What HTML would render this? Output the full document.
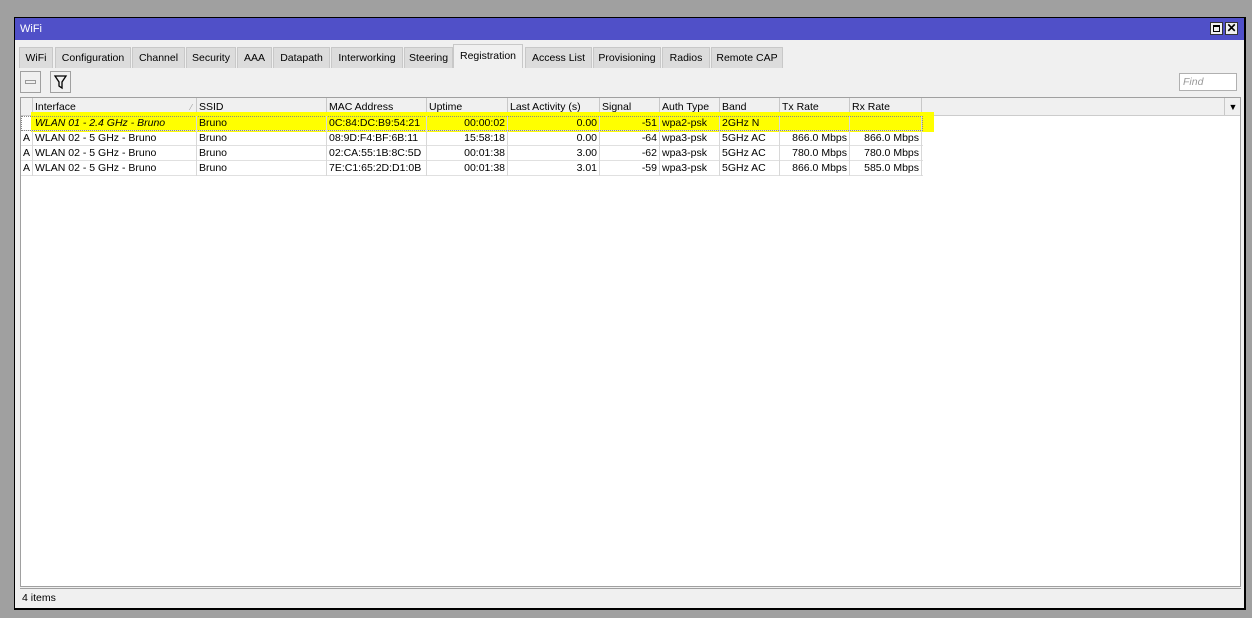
<!DOCTYPE html>
<html><head><style>
*{margin:0;padding:0;box-sizing:border-box}
body{width:1252px;height:618px;background:#a0a0a0;font-family:"Liberation Sans",sans-serif;font-size:10.5px;color:#000;position:relative;overflow:hidden}
.win{position:absolute;left:14px;top:17px;width:1232px;height:593px;background:#f0f0f0;border:1px solid #000;border-right:2px solid #000;border-bottom:2px solid #000}
.title{position:absolute;left:0;top:0;width:100%;height:22px;background:#5050c8;color:#fff;font-size:11px;padding:5px 5px}
.tb{position:absolute;top:4px;width:13px;height:13px;background:#f0f0f0;border:1px solid #333}
.tabs{position:absolute;left:4px;top:26px;height:24px}
.tab{position:absolute;top:3px;height:21px;background:#dcdcdc;border:1px solid #c8c8c8;border-bottom:none;padding:4px 0 0;text-align:center}
.tab.act{top:0;height:24px;background:#f0f0f0;padding-top:5px}
.btn{position:absolute;top:53px;width:21px;height:22px;border:1px solid #a0a0a0;background:#f0f0f0}
.find{position:absolute;left:1164px;top:55px;width:58px;height:18px;background:#fff;border:1px solid #b0b0b0;color:#999;font-style:italic;padding:2px 3px}
.grid{position:absolute;left:5px;top:79px;width:1221px;height:490px;background:#fff;border:1px solid #a0a0a0}
.hdr{position:absolute;left:0;top:0;width:100%;height:18px;background:#f0f0f0;border-bottom:1px solid #ccc}
.c{position:absolute;white-space:nowrap;height:15px;line-height:15px;padding:0 2px;border-right:1px solid #d8d8d8}
.hdr .c{height:17px;line-height:19px;border-right:1px solid #c8c8c8}
.r{text-align:right}
.row{position:absolute;left:0;height:15px;width:902px;border-bottom:1px solid #e0e0e0}
.status{position:absolute;left:5px;top:570px;width:1221px;height:18px;border-top:1px solid #a0a0a0;padding:3px 2px}
.hl{position:absolute;left:10px;top:14px;width:903px;height:20px;background:#ffff00}
</style></head><body>
<div class="win">
<div class="title">WiFi
<div class="tb" style="left:1195px"><div style="position:absolute;left:2px;top:2px;width:7px;height:7px;border:1px solid #000;border-top-width:2px"></div></div>
<div class="tb" style="left:1210px;font-weight:bold;color:#000;font-size:12px;line-height:11px;text-align:center">✕</div>
</div>
<div class="tabs">
<div class="tab" style="left:0;width:34px">WiFi</div>
<div class="tab" style="left:36px;width:76px">Configuration</div>
<div class="tab" style="left:113px;width:53px">Channel</div>
<div class="tab" style="left:167px;width:50px">Security</div>
<div class="tab" style="left:218px;width:35px">AAA</div>
<div class="tab" style="left:254px;width:57px">Datapath</div>
<div class="tab" style="left:312px;width:72px">Interworking</div>
<div class="tab" style="left:385px;width:49px">Steering</div>
<div class="tab act" style="left:434px;width:70px">Registration</div>
<div class="tab" style="left:506px;width:67px">Access List</div>
<div class="tab" style="left:574px;width:68px">Provisioning</div>
<div class="tab" style="left:643px;width:48px">Radios</div>
<div class="tab" style="left:692px;width:72px">Remote CAP</div>
</div>
<div class="btn" style="left:5px"><div style="position:absolute;left:4px;top:8px;width:11px;height:4px;border:1px solid #999"></div></div>
<div class="btn" style="left:35px"><svg width="19" height="20" viewBox="0 0 19 20"><path d="M4 4h11l-4 6v6l-3-2v-4z" fill="none" stroke="#000" stroke-width="1.3"/></svg></div>
<div class="find">Find</div>
<div class="grid">
<div class="hdr">
<div class="c" style="left:0;width:12px"></div>
<div class="c" style="left:12px;width:164px">Interface<span style="position:absolute;right:4px;color:#999;font-size:8px">⁄</span></div>
<div class="c" style="left:176px;width:130px">SSID</div>
<div class="c" style="left:306px;width:100px">MAC Address</div>
<div class="c" style="left:406px;width:81px">Uptime</div>
<div class="c" style="left:487px;width:92px">Last Activity (s)</div>
<div class="c" style="left:579px;width:60px">Signal</div>
<div class="c" style="left:639px;width:60px">Auth Type</div>
<div class="c" style="left:699px;width:60px">Band</div>
<div class="c" style="left:759px;width:70px">Tx Rate</div>
<div class="c" style="left:829px;width:72px">Rx Rate</div>
<div class="c" style="left:1203px;width:17px;border-left:1px solid #c8c8c8;border-right:none;font-size:9px;text-align:center">▼</div>
</div>
<div class="hl"></div>
<div class="row" style="top:18px;outline:1px dotted #888;outline-offset:-1px">
<div class="c" style="left:12px;width:164px;font-style:italic">WLAN 01 - 2.4 GHz - Bruno</div>
<div class="c" style="left:176px;width:130px">Bruno</div>
<div class="c" style="left:306px;width:100px">0C:84:DC:B9:54:21</div>
<div class="c r" style="left:406px;width:81px">00:00:02</div>
<div class="c r" style="left:487px;width:92px">0.00</div>
<div class="c r" style="left:579px;width:60px">-51</div>
<div class="c" style="left:639px;width:60px">wpa2-psk</div>
<div class="c" style="left:699px;width:60px">2GHz N</div>
<div class="c" style="left:759px;width:70px"></div>
<div class="c" style="left:829px;width:72px"></div>
</div>
<div class="row" style="top:33px">
<div class="c" style="left:0;width:12px">A</div>
<div class="c" style="left:12px;width:164px">WLAN 02 - 5 GHz - Bruno</div>
<div class="c" style="left:176px;width:130px">Bruno</div>
<div class="c" style="left:306px;width:100px">08:9D:F4:BF:6B:11</div>
<div class="c r" style="left:406px;width:81px">15:58:18</div>
<div class="c r" style="left:487px;width:92px">0.00</div>
<div class="c r" style="left:579px;width:60px">-64</div>
<div class="c" style="left:639px;width:60px">wpa3-psk</div>
<div class="c" style="left:699px;width:60px">5GHz AC</div>
<div class="c r" style="left:759px;width:70px">866.0 Mbps</div>
<div class="c r" style="left:829px;width:72px">866.0 Mbps</div>
</div>
<div class="row" style="top:48px">
<div class="c" style="left:0;width:12px">A</div>
<div class="c" style="left:12px;width:164px">WLAN 02 - 5 GHz - Bruno</div>
<div class="c" style="left:176px;width:130px">Bruno</div>
<div class="c" style="left:306px;width:100px">02:CA:55:1B:8C:5D</div>
<div class="c r" style="left:406px;width:81px">00:01:38</div>
<div class="c r" style="left:487px;width:92px">3.00</div>
<div class="c r" style="left:579px;width:60px">-62</div>
<div class="c" style="left:639px;width:60px">wpa3-psk</div>
<div class="c" style="left:699px;width:60px">5GHz AC</div>
<div class="c r" style="left:759px;width:70px">780.0 Mbps</div>
<div class="c r" style="left:829px;width:72px">780.0 Mbps</div>
</div>
<div class="row" style="top:63px">
<div class="c" style="left:0;width:12px">A</div>
<div class="c" style="left:12px;width:164px">WLAN 02 - 5 GHz - Bruno</div>
<div class="c" style="left:176px;width:130px">Bruno</div>
<div class="c" style="left:306px;width:100px">7E:C1:65:2D:D1:0B</div>
<div class="c r" style="left:406px;width:81px">00:01:38</div>
<div class="c r" style="left:487px;width:92px">3.01</div>
<div class="c r" style="left:579px;width:60px">-59</div>
<div class="c" style="left:639px;width:60px">wpa3-psk</div>
<div class="c" style="left:699px;width:60px">5GHz AC</div>
<div class="c r" style="left:759px;width:70px">866.0 Mbps</div>
<div class="c r" style="left:829px;width:72px">585.0 Mbps</div>
</div>
</div>
<div class="status">4 items</div>
</div>
</body></html>
